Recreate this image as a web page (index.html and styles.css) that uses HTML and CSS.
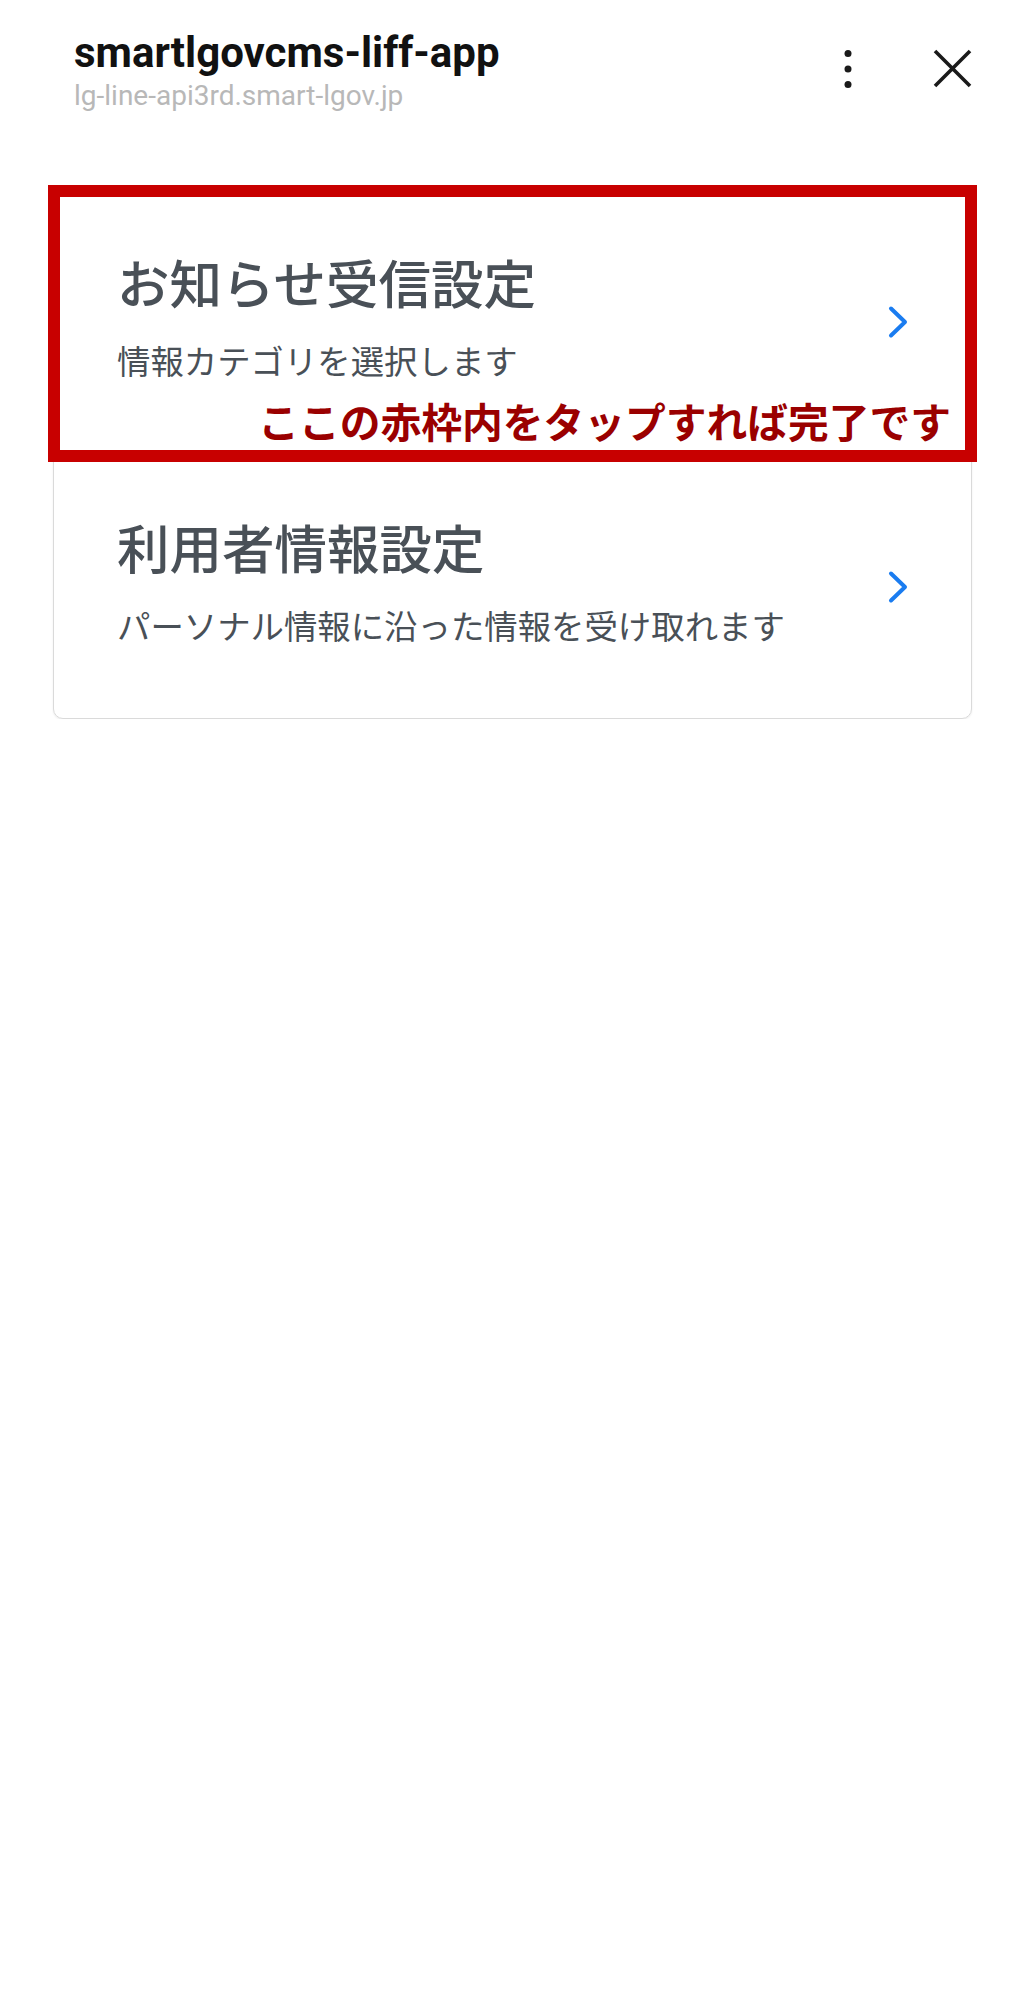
FILE: index.html
```html
<!DOCTYPE html>
<html lang="ja">
<head>
<meta charset="utf-8">
<title>smartlgovcms-liff-app</title>
<link rel="stylesheet" href="styles.css">
</head>
<body>
<header class="appbar">
  <div class="titles">
    <div class="app-title">smartlgovcms-liff-app</div>
    <div class="app-url">lg-line-api3rd.smart-lgov.jp</div>
  </div>
  <div class="actions">
    <svg class="icon-more" width="8" height="40" viewBox="0 0 8 40" aria-hidden="true">
      <circle cx="4" cy="4.5" r="3.5"/>
      <circle cx="4" cy="20" r="3.5"/>
      <circle cx="4" cy="35.5" r="3.5"/>
    </svg>
    <svg class="icon-close" width="39" height="39" viewBox="0 0 39 39" aria-hidden="true">
      <path d="M2 2 L37 37 M37 2 L2 37"/>
    </svg>
  </div>
</header>

<main class="content">
  <div class="list">
    <a class="item">
      <div class="item-text">
        <div class="item-title">お知らせ受信設定</div>
        <div class="item-sub">情報カテゴリを選択します</div>
      </div>
      <svg class="chevron" width="22" height="34" viewBox="0 0 22 34" aria-hidden="true">
        <path d="M4 3.5 L18 17 L4 30.5"/>
      </svg>
    </a>
    <a class="item">
      <div class="item-text">
        <div class="item-title">利用者情報設定</div>
        <div class="item-sub">パーソナル情報に沿った情報を受け取れます</div>
      </div>
      <svg class="chevron" width="22" height="34" viewBox="0 0 22 34" aria-hidden="true">
        <path d="M4 3.5 L18 17 L4 30.5"/>
      </svg>
    </a>
    <div class="highlight">
      <span class="highlight-note">ここの赤枠内をタップすれば完了です</span>
    </div>
  </div>
</main>
</body>
</html>
```

FILE: styles.css
```css
* { box-sizing: border-box; }

html, body {
  margin: 0;
  padding: 0;
  background: #ffffff;
}

body {
  font-family: Roboto, "Noto Sans CJK JP", sans-serif;
}

.appbar {
  display: flex;
  align-items: flex-start;
  padding: 28px 53px 0 74px;
}

.titles {
  flex: 1;
}

.app-title {
  font-family: Roboto, sans-serif;
  font-weight: 700;
  font-size: 42px;
  line-height: 50px;
  color: #111111;
}

.app-url {
  font-family: Roboto, sans-serif;
  font-size: 28px;
  line-height: 33px;
  color: #b8b8b8;
  margin-top: 1px;
}

.actions {
  display: flex;
  align-items: center;
  gap: 81px;
  height: 39px;
  margin-top: 21px;
}

.icon-more circle {
  fill: #1a1a1a;
}

.icon-close path {
  stroke: #1a1a1a;
  stroke-width: 3.6;
  fill: none;
}

.content {
  padding: 76px 53px 0 53px;
}

.list {
  position: relative;
  border: 1px solid #dadada;
  border-radius: 10px;
  box-shadow: 0 1px 2px rgba(0, 0, 0, 0.08);
}

.item {
  display: flex;
  align-items: center;
  min-height: 265px;
  padding: 0 62px 0 63px;
  font-family: "Noto Sans CJK JP", sans-serif;
  color: #495057;
  text-decoration: none;
}

.item + .item {
  border-top: 1px solid #dadada;
  min-height: 264px;
}

.item-text {
  flex: 1;
  margin-bottom: 14px;
}

.item-title {
  font-size: 52.5px;
  font-weight: 500;
  line-height: 62px;
}

.item-sub {
  font-size: 33.4px;
  font-weight: 400;
  line-height: 40px;
  margin-top: 28px;
}

.chevron path {
  stroke: #1a7cf0;
  stroke-width: 4;
  stroke-linecap: round;
  stroke-linejoin: round;
  fill: none;
}

.highlight {
  position: absolute;
  left: -6px;
  top: -4px;
  width: 929px;
  height: 277px;
  border: 12px solid #c80000;
  pointer-events: none;
}

.highlight-note {
  position: absolute;
  right: 14px;
  bottom: 9px;
  font-family: "Noto Sans CJK JP", sans-serif;
  font-weight: 700;
  font-size: 40.75px;
  line-height: 40px;
  color: #9a0000;
  white-space: nowrap;
}
```
